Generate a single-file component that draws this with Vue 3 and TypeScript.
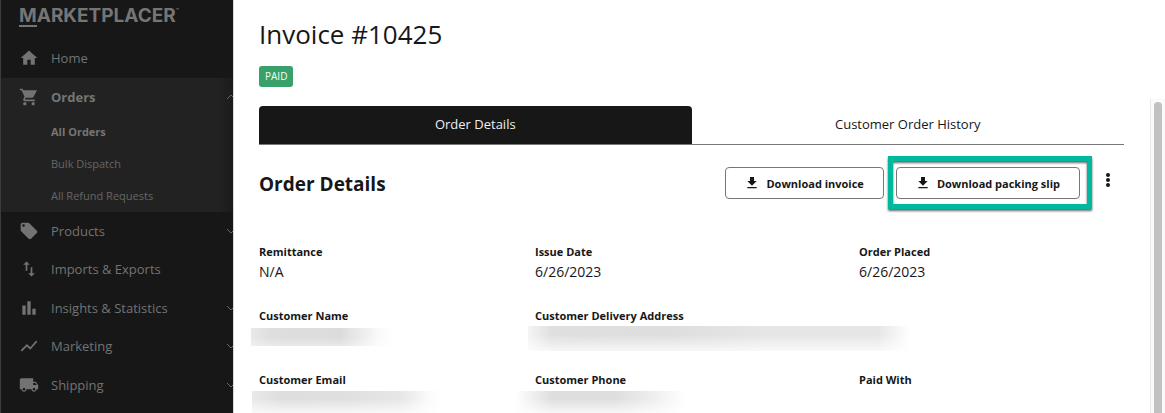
<script setup lang="ts">
import { ref } from 'vue'

interface NavItem {
  label: string
  icon: string
  expandable: boolean
}

const icons = {
  home: 'M10 20v-6h4v6h5v-8h3L12 3 2 12h3v8z',
  cart: 'M7 18c-1.100 0-1.990.9-1.990 2S5.900 22 7 22s2-.9 2-2-.9-2-2-2zM1 2v2h2l3.600 7.590-1.350 2.450c-.16.28-.25.61-.25.96 0 1.100.9 2 2 2h12v-2H7.420c-.14 0-.25-.11-.25-.25l.03-.12.9-1.630h7.450c.75 0 1.410-.41 1.750-1.030L21.700 4H5.210l-.94-2H1zm16 16c-1.100 0-1.990.9-1.990 2s.89 2 1.990 2 2-.9 2-2-.9-2-2-2z',
  tag: 'M21.410 11.580l-9-9C12.050 2.220 11.550 2 11 2H4c-1.100 0-2 .9-2 2v7c0 .55.22 1.050.59 1.420l9 9c.36.36.86.58 1.410.58s1.050-.22 1.410-.59l7-7c.37-.36.59-.86.59-1.410s-.23-1.060-.59-1.420zM5.500 7C4.670 7 4 6.330 4 5.500S4.670 4 5.500 4 7 4.670 7 5.500 6.330 7 5.500 7z',
  swap: 'M16 17.010V10h-2v7.010h-3L15 21l4-3.990h-3zM9 3L5 6.990h3V14h2V6.990h3L9 3z',
  bars: 'M4 9h4v11H4zM10 4h4v16h-4zM16 13h4v7h-4z',
  trend: 'M3.500 18.490l6-6.010 4 4L22 6.920l-1.410-1.410-7.090 7.970-4-4L2 16.990z',
  truck: 'M20 8h-3V4H3c-1.100 0-2 .9-2 2v11h2c0 1.660 1.340 3 3 3s3-1.340 3-3h6c0 1.660 1.340 3 3 3s3-1.340 3-3h2v-5l-3-4zM6 18.500c-.83 0-1.500-.67-1.500-1.500s.67-1.500 1.500-1.500 1.500.67 1.500 1.500-.67 1.500-1.500 1.500zm13.500-9l1.960 2.500H17V9.500h2.500zm-1.500 9c-.83 0-1.500-.67-1.500-1.500s.67-1.500 1.500-1.500 1.500.67 1.500 1.500-.67 1.500-1.500 1.500z',
  download: 'M19 9h-4V3H9v6H5l7 7 7-7zM5 18v2h14v-2H5z',
}

const orderLinks = ['All Orders', 'Bulk Dispatch', 'All Refund Requests']

const navItems: NavItem[] = [
  { label: 'Products', icon: icons.tag, expandable: true },
  { label: 'Imports & Exports', icon: icons.swap, expandable: false },
  { label: 'Insights & Statistics', icon: icons.bars, expandable: true },
  { label: 'Marketing', icon: icons.trend, expandable: true },
  { label: 'Shipping', icon: icons.truck, expandable: true },
]

const tabs = ['Order Details', 'Customer Order History']
const activeTab = ref(tabs[0])

const fields = [
  { label: 'Remittance', value: 'N/A' },
  { label: 'Issue Date', value: '6/26/2023' },
  { label: 'Order Placed', value: '6/26/2023' },
  { label: 'Customer Name', redacted: 'name' },
  { label: 'Customer Delivery Address', redacted: 'address' },
  null,
  { label: 'Customer Email', redacted: 'email' },
  { label: 'Customer Phone', redacted: 'phone' },
  { label: 'Paid With' },
]
</script>

<template>
  <div class="app">
    <aside class="sidebar">
      <a class="logo" href="#"><span class="logo-m">M</span>ARKETPLACER<span class="tm">™</span></a>
      <nav>
        <a class="row" href="#">
          <svg class="icon" viewBox="0 0 24 24"><path :d="icons.home" /></svg>
          <span>Home</span>
        </a>
        <div class="group">
          <a class="row current" href="#">
            <svg class="icon" viewBox="0 0 24 24"><path :d="icons.cart" /></svg>
            <span>Orders</span>
            <svg class="chevron" viewBox="0 0 10 6"><path d="M1 5l4-4 4 4" /></svg>
          </a>
          <a v-for="(link, i) in orderLinks" :key="link" class="sub" :class="{ current: i === 0 }" href="#">{{ link }}</a>
        </div>
        <div class="more">
          <a v-for="item in navItems" :key="item.label" class="row" href="#">
            <svg class="icon" viewBox="0 0 24 24"><path :d="item.icon" /></svg>
            <span>{{ item.label }}</span>
            <svg v-if="item.expandable" class="chevron" viewBox="0 0 10 6"><path d="M1 1l4 4 4-4" /></svg>
          </a>
        </div>
      </nav>
    </aside>

    <main class="panel">
      <header class="head">
        <h1>Invoice #10425</h1>
        <span class="badge">PAID</span>
      </header>
      <div class="body">
        <div class="content">
          <div class="tabs" role="tablist">
            <button
              v-for="tab in tabs"
              :key="tab"
              type="button"
              role="tab"
              class="tab"
              :class="{ active: tab === activeTab }"
              :aria-selected="tab === activeTab"
              @click="activeTab = tab"
            >{{ tab }}</button>
          </div>

          <div class="toolbar">
            <h2>Order Details</h2>
            <button type="button" class="btn">
              <svg viewBox="0 0 24 24"><path :d="icons.download" /></svg>Download invoice
            </button>
            <div class="spot">
              <button type="button" class="btn">
                <svg viewBox="0 0 24 24"><path :d="icons.download" /></svg>Download packing slip
              </button>
            </div>
            <button type="button" class="kebab" aria-label="More actions">
              <svg viewBox="0 0 4 14"><circle cx="2" cy="2" r="2" /><circle cx="2" cy="7" r="2" /><circle cx="2" cy="12" r="2" /></svg>
            </button>
          </div>

          <dl class="fields">
            <div v-for="(field, i) in fields" :key="i" class="field">
              <template v-if="field">
                <dt>{{ field.label }}</dt>
                <dd v-if="field.value">{{ field.value }}</dd>
                <dd v-else-if="field.redacted" class="redacted" :class="field.redacted"><i></i></dd>
              </template>
            </div>
          </dl>
        </div>
        <div class="scrollbar"><div class="thumb"></div></div>
      </div>
    </main>
  </div>
</template>

<style>
body {
  margin: 0;
  overflow: hidden;
}
</style>

<style scoped>
.app {
  display: flex;
  height: 100vh;
  overflow: hidden;
  background: #fff;
  color: #171717;
  font-family: "Open Sans", "Noto Sans", sans-serif;
}
.app * {
  box-sizing: border-box;
}
a {
  color: inherit;
  text-decoration: none;
}
button {
  font-family: inherit;
  color: inherit;
  cursor: pointer;
}
.sidebar {
  flex: none;
  width: 234px;
  overflow: hidden;
  background: #171717;
  color: #737373;
  border-left: 1px solid #3c3c3c;
  border-right: 1px solid #d8d8d8;
}
.logo {
  display: flex;
  height: 39px;
  padding: 4px 0 0 18px;
  font: 700 19px/24px Inter, sans-serif;
  color: #757575;
}
.logo-m {
  height: 23px;
  border-bottom: 2px solid #757575;
}
.tm {
  font-size: 5px;
  line-height: 12px;
}
.row {
  display: flex;
  align-items: center;
  height: 38px;
  padding-left: 18px;
  font-size: 13px;
  line-height: 18px;
}
.row > span {
  flex: 1;
}
nav > .row {
  height: 39px;
  padding-bottom: 1px;
}
.more .row:nth-child(even) {
  height: 39px;
  padding-bottom: 1px;
}
.icon {
  width: 20px;
  height: 20px;
  margin-right: 12px;
  fill: #737373;
}
.chevron {
  flex: none;
  width: 10px;
  height: 6px;
  margin-right: -3px;
  fill: none;
  stroke: #666;
  stroke-width: 1;
}
.group {
  background: linear-gradient(to left, #1b1b1b, #222 14px);
}
.sub {
  display: block;
  padding-left: 50px;
  font-size: 11px;
  line-height: 32px;
  color: #666;
}
.current {
  font-weight: 700;
  color: #757575;
}
.panel {
  display: flex;
  flex: 1;
  flex-direction: column;
  min-width: 0;
}
.head {
  padding: 16px 25px 11px;
}
h1 {
  margin: 0 0 14px;
  font-size: 26px;
  font-weight: 400;
  line-height: 36px;
}
.badge {
  display: block;
  width: max-content;
  padding: 0 6px;
  border-radius: 3px;
  background: #38a169;
  color: #f2fff7;
  font-size: 10px;
  line-height: 21px;
}
.body {
  display: flex;
  flex: 1;
  min-height: 0;
}
.content {
  flex: 1;
  padding: 8px 26px 0 25px;
}
.tabs {
  display: flex;
  border-bottom: 1px solid #777;
}
.tab {
  flex: 1;
  height: 38px;
  padding: 0 0 2px;
  border: 0;
  border-radius: 4px 4px 0 0;
  background: none;
  font-size: 13px;
}
.tab.active {
  background: #171717;
  color: #eee;
}
.toolbar {
  display: flex;
  align-items: center;
  margin-top: 21px;
}
h2 {
  flex: 1;
  margin: 0;
  padding-top: 2px;
  font-size: 19px;
  font-weight: 700;
  line-height: 32px;
}
.btn {
  display: flex;
  align-items: center;
  height: 32px;
  padding: 0 19px 0 18px;
  border: 1px solid #777;
  border-radius: 4px;
  background: #fff;
  font-size: 11px;
  font-weight: 700;
  white-space: nowrap;
}
.btn svg {
  width: 16px;
  height: 16px;
  margin-right: 6px;
  fill: #171717;
}
.spot {
  position: relative;
  margin: 0 18px 0 12px;
}
.spot::after {
  content: "";
  position: absolute;
  inset: -11px -12px -10px -8px;
  border: 5px solid #00b99c;
  filter: drop-shadow(0 2px 1px rgba(0, 0, 0, 0.6));
  pointer-events: none;
}
.kebab {
  width: 20px;
  height: 32px;
  margin-right: 6px;
  padding: 0 0 6px;
  border: 0;
  background: none;
}
.kebab svg {
  display: block;
  width: 4px;
  height: 14px;
  margin: auto;
  fill: #171717;
}
.fields {
  display: grid;
  grid-template-columns: minmax(0, 276fr) minmax(0, 324fr) minmax(0, 265fr);
  grid-auto-rows: 64px;
  margin: 43px 0 0;
}
dt {
  font-size: 11px;
  font-weight: 700;
  line-height: 18px;
}
dd {
  margin: 0;
  font-size: 14px;
  line-height: 22px;
}
.redacted {
  overflow: hidden;
  margin-left: -7px;
}
.redacted i {
  display: block;
  height: 100%;
}
.name {
  width: 142px;
  height: 18px;
  margin: 3px 0 0 -8px;
  background: linear-gradient(to right, #e9e9e9, #dedede 20px, #dcdcdc 90px, #fafafa 128px, #fff);
}
.address {
  width: 382px;
  height: 25px;
  margin-top: 1px;
  background: linear-gradient(to right, #f4f4f4, #dfdfdf 24px, #dedede 140px, #e6e6e6 240px, #e6e6e6 350px, #fff);
}
.email {
  width: 190px;
  height: 22px;
  margin-top: 2px;
  background: linear-gradient(to right, #e9e9e9, #dedede 30px, #dfdfdf 90px, #e7e7e7 150px, #fafafa 176px, #fff);
}
.phone {
  width: 174px;
  height: 22px;
  margin: 2px 0 0 -20px;
  background: linear-gradient(to right, #fff, #dedede 38px, #dedede 100px, #ededed 136px, #fff 170px);
}
.redacted i {
  background: linear-gradient(to bottom, transparent 35%, rgba(255, 255, 255, 0.75));
}
.name i {
  background: linear-gradient(to bottom, transparent 50%, rgba(255, 255, 255, 0.35));
}
.scrollbar {
  width: 15px;
  margin-top: 1px;
  padding: 3px 3px 0;
  border-left: 1px solid #e8e8e8;
  background: #fafafa;
}
.thumb {
  width: 8px;
  height: 100%;
  border-radius: 4px 4px 0 0;
  background: #c1c1c1;
}
</style>
